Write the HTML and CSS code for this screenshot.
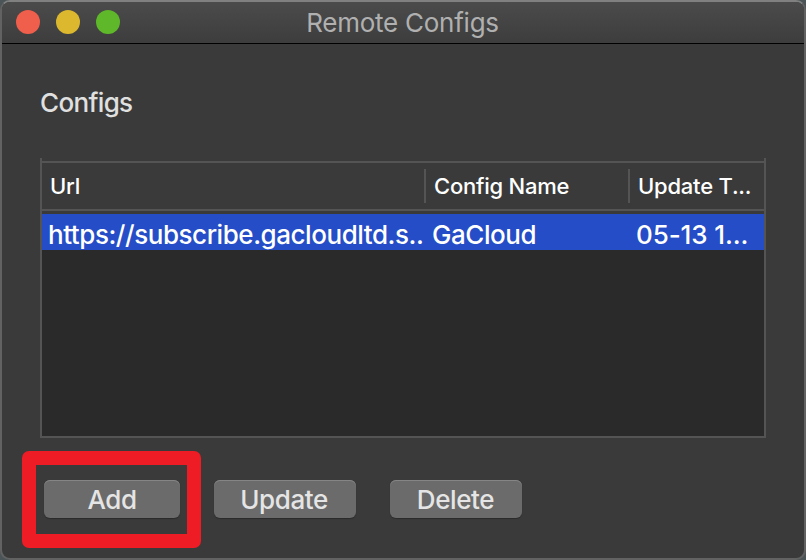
FILE: index.html
```html
<!DOCTYPE html>
<html lang="en">
<head>
<meta charset="utf-8">
<title>Remote Configs</title>
<link rel="stylesheet" href="styles.css">
</head>
<body>
<div class="window">
  <header class="titlebar">
    <div class="lights">
      <span class="light close"></span>
      <span class="light minimize"></span>
      <span class="light zoom"></span>
    </div>
    <h1 class="title">Remote Configs</h1>
  </header>
  <main class="content">
    <h2 class="label">Configs</h2>
    <div class="table">
      <div class="row head">
        <div class="cell">Url</div>
        <div class="cell">Config Name</div>
        <div class="cell">Update T...</div>
      </div>
      <div class="row selected">
        <div class="cell url">https://subscribe.gacloudltd.s..</div>
        <div class="cell name">GaCloud</div>
        <div class="cell time">05-13 1...</div>
      </div>
    </div>
    <div class="actions">
      <div class="marked"><button class="btn add">Add</button><span class="highlight"></span></div>
      <button class="btn update">Update</button>
      <button class="btn delete">Delete</button>
    </div>
  </main>
</div>
</body>
</html>
```

FILE: styles.css
```css
* { box-sizing: border-box; }
body {
  margin: 0;
  background: #4b5456;
  font-family: Inter, "Liberation Sans", sans-serif;
  font-size: 26px;
}
.window {
  height: 560px;
  border: 2px solid #626262;
  border-top-color: #808080;
  border-radius: 10px;
  background: #3a3a3a;
  overflow: hidden;
}
.titlebar {
  display: grid;
  grid-template-columns: 1fr auto 1fr;
  height: 42px;
  border-bottom: 1px solid #000;
  background: linear-gradient(#4b4b4b, #3d3d3d);
}
.lights {
  display: flex;
  gap: 16px;
  padding: 8px 0 0 14px;
}
.light {
  width: 24px;
  height: 24px;
  border-radius: 50%;
}
.close { background: #f05e4c; }
.minimize { background: #dcb82e; }
.zoom { background: #5eb829; }
.title {
  margin: 0 1px 0 0;
  color: #b0b0b0;
  font-size: 26px;
  font-weight: 400;
  line-height: 41px;
  letter-spacing: -0.25px;
}
.content { padding: 42px 38px 0; }
.label {
  margin: 0;
  height: 72px;
  color: #e0e0e0;
  font-size: 26px;
  font-weight: 450;
  line-height: 34px;
  letter-spacing: -0.65px;
}
.table {
  height: 280px;
  padding-top: 3px;
  border: 2px solid #545454;
  border-top: 0;
  background: linear-gradient(#3a3a3a 56px, #2a2a2a 56px);
}
.row {
  display: grid;
  grid-template-columns: 384px 204px 1fr;
  color: #fff;
  white-space: nowrap;
}
.head {
  height: 50px;
  padding: 6px 0;
  border: solid #545454;
  border-width: 2px 0;
  font-size: 22px;
  font-weight: 550;
  line-height: 34px;
  letter-spacing: -0.22px;
}
.head .cell { padding-left: 8px; }
.head .cell:not(:last-child) { border-right: 2px solid #545454; }
.selected {
  height: 36px;
  margin-top: 3px;
  background: #244dc7;
  font-weight: 500;
  line-height: 42px;
}
.selected .cell { padding-left: 6px; }
.url { letter-spacing: -0.45px; }
.name { letter-spacing: -0.45px; }
.time { letter-spacing: -0.1px; }
.actions {
  display: flex;
  margin-top: 42px;
  padding-left: 4px;
}
.marked {
  position: relative;
  margin-right: 34px;
}
.highlight {
  position: absolute;
  top: -29px;
  left: -22px;
  width: 179px;
  height: 97px;
  border: 14px solid #ee1c24;
  border-radius: 7px;
}
.btn {
  display: block;
  height: 38px;
  padding: 0;
  border: 0;
  border-radius: 6px;
  background: #6b6b6b;
  box-shadow: inset 0 1px #858585, 0 1px 1px #2b2b2b;
  color: #e5e5e5;
  font: 450 26px/40px Inter, "Liberation Sans", sans-serif;
  letter-spacing: -0.4px;
}
.add { width: 136px; }
.update { width: 142px; padding-right: 2px; margin-right: 34px; }
.delete { width: 132px; padding-right: 1px; }
```
